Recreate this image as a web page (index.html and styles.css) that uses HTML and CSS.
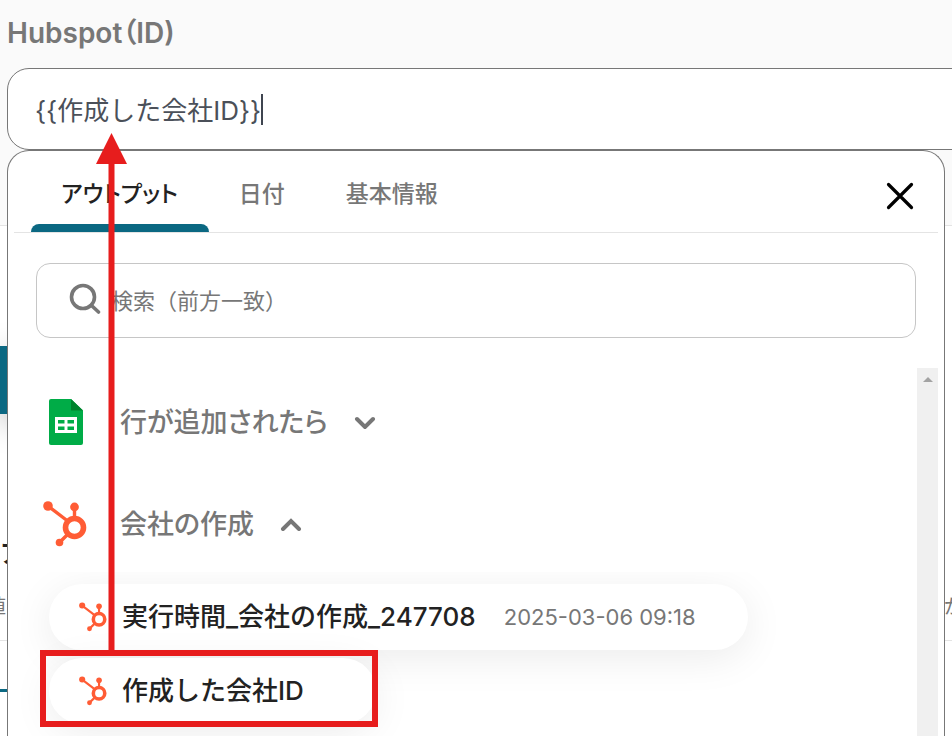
FILE: index.html
```html
<!DOCTYPE html>
<html lang="ja">
<head>
    <meta charset="UTF-8">
    <meta name="viewport" content="width=device-width, initial-scale=1.0">
    <title>Hubspot（ID)</title>
    <link rel="stylesheet" href="styles.css">
</head>
<body>
    <svg class="symbols" aria-hidden="true">
        <symbol id="hubspot" viewBox="0 0 44 46">
            <g fill="none" stroke="#ff5c35">
                <circle cx="31.500" cy="26.500" r="9" stroke-width="5.600"/>
                <path d="M31.500 16V6M24 19.500L5 5M25 33L16 42" stroke-width="3.400"/>
            </g>
            <g fill="#ff5c35">
                <circle cx="5" cy="5" r="4.800"/>
                <circle cx="31.500" cy="6" r="4.400"/>
                <circle cx="16.500" cy="41.500" r="3.800"/>
            </g>
        </symbol>
    </svg>

    <div class="page">
        <div class="field">
            <label for="companyId">Hubspot（ID)</label>
            <div class="field-box">
                <input type="text" id="companyId" value="{{作成した会社ID}}">
                <span class="caret"></span>
            </div>
        </div>

        <!-- パネルの後ろの画面 -->
        <div class="behind">
            <button type="button" class="save" aria-label="保存"></button>
            <div class="behind-title"><span>ア</span></div>
            <div class="behind-row"><span class="edge">値</span><span class="edge-right">が</span></div>
            <div class="behind-line"></div>
        </div>

        <div class="panel">
            <div class="panel-head">
                <div class="tabs" role="tablist">
                    <button type="button" role="tab" class="tab active" aria-selected="true">アウトプット</button>
                    <button type="button" role="tab" class="tab">日付</button>
                    <button type="button" role="tab" class="tab">基本情報</button>
                </div>
                <button type="button" class="close" aria-label="閉じる">
                    <svg width="28" height="28" viewBox="0 0 28 28"><path d="M2.500 2.500L25.500 25.500M25.500 2.500L2.500 25.500" fill="none" stroke="#000" stroke-width="3.200" stroke-linecap="round"/></svg>
                </button>
            </div>

            <div class="search">
                <svg width="32" height="32" viewBox="0 0 32 32"><g fill="none" stroke="#777" stroke-width="3.600" stroke-linecap="round"><circle cx="14" cy="14" r="11.500"/><path d="M22.500 22.500L29.500 29"/></g></svg>
                <input type="text" aria-label="検索" placeholder="検索（前方一致）">
            </div>

            <div class="list">
                <div class="list-body">
                    <button type="button" class="group">
                        <span class="group-icon">
                            <svg width="34" height="46" viewBox="0 0 34 46">
                                <path d="M2 0H22L34 11.500V44a2 2 0 0 1-2 2H2a2 2 0 0 1-2-2V2a2 2 0 0 1 2-2z" fill="#00ac47"/>
                                <path d="M22 0L34 11.500H22z" fill="#00832d"/>
                                <path d="M6 18H28V34H6z" fill="#fff"/>
                                <path d="M9 21h6.500v3.500H9zM18.500 21H25v3.500h-6.500zM9 27.500h6.500V31H9zM18.500 27.500H25V31h-6.500z" fill="#00ac47"/>
                            </svg>
                        </span>
                        <span class="group-name">行が追加されたら</span>
                        <svg class="chevron" width="22" height="14" viewBox="0 0 22 14"><path d="M3 4L11 12L19 4" fill="none" stroke="#777" stroke-width="4" stroke-linecap="round"/></svg>
                    </button>
                    <button type="button" class="group">
                        <span class="group-icon"><svg width="46" height="46" viewBox="0 0 46 46"><use href="#hubspot" width="44" height="46"/></svg></span>
                        <span class="group-name">会社の作成</span>
                        <svg class="chevron" width="22" height="14" viewBox="0 0 22 14"><path d="M3 12L11 4L19 12" fill="none" stroke="#777" stroke-width="4" stroke-linecap="round"/></svg>
                    </button>
                    <div class="outputs">
                        <button type="button" class="output">
                            <svg class="output-icon" width="28" height="30"><use href="#hubspot"/></svg>
                            <span class="output-name">実行時間_会社の作成_247708</span>
                            <span class="output-value">2025-03-06 09:18</span>
                        </button>
                        <button type="button" class="output">
                            <svg class="output-icon" width="28" height="30"><use href="#hubspot"/></svg>
                            <span class="output-name">作成した会社ID</span>
                        </button>
                    </div>
                </div>
                <div class="scrollbar"></div>
            </div>
        </div>

        <!-- 矢印と赤枠 -->
        <svg class="marker" width="400" height="736" viewBox="0 0 400 736">
            <path d="M111.500 133L127 164H96z" fill="#e71d1d"/>
            <path d="M111.500 160V653" stroke="#e71d1d" stroke-width="6"/>
            <rect x="43" y="653" width="332" height="71" fill="none" stroke="#e71d1d" stroke-width="6"/>
        </svg>
    </div>
</body>
</html>
```

FILE: styles.css
```css
* {
    box-sizing: border-box;
}
body {
    margin: 0;
    font-family: Inter, "Noto Sans CJK JP", sans-serif;
    color: #777;
    background: #fff;
}
button,
input {
    font-family: inherit;
    color: inherit;
    background: none;
    border: none;
    padding: 0;
    outline: none;
}
button {
    cursor: pointer;
}
svg {
    display: block;
    flex: none;
}
.symbols {
    position: absolute;
    width: 0;
    height: 0;
}
.page {
    position: relative;
    height: 100vh;
    overflow: hidden;
}

/* 入力欄 */
.field {
    height: 226px;
    padding: 16px 0 0 7px;
    background: #fafafa;
    border-bottom: 1px solid #e4e4e4;
}
.field label {
    display: block;
    height: 52px;
    line-height: 34px;
    font-size: 28px;
    font-weight: 600;
    font-feature-settings: "palt";
}
.field-box {
    display: flex;
    align-items: center;
    height: 82px;
    margin-right: -40px;
    padding-left: 27px;
    border: 1px solid #777;
    border-radius: 22px;
    background: #fff;
}
.field-box input {
    field-sizing: content;
    height: 40px;
    padding-bottom: 2px;
    font-size: 26px;
    color: #4b5059;
}
.caret {
    width: 2px;
    height: 31px;
    background: #3f4550;
}

/* 後ろの画面 */
.behind {
    padding-top: 120px;
}
.save {
    display: block;
    width: 60px;
    height: 68px;
    background: #0b6882;
    box-shadow: 0 8px 32px rgba(0, 0, 0, 0.25);
}
.behind-title {
    margin-top: 120px;
    height: 40px;
    line-height: 40px;
    font-size: 24px;
    font-weight: 700;
    color: #222;
}
.behind-row {
    display: flex;
    justify-content: space-between;
    height: 67px;
    padding: 16px 8px 0 0;
    line-height: 34px;
    font-size: 20px;
    border-bottom: 1px solid #e4e4e4;
}
.edge {
    display: flex;
    justify-content: flex-end;
    width: 6px;
}
.edge-right {
    width: 0;
}
.behind-line {
    width: 40px;
    height: 3px;
    margin-top: 48px;
    background: #0b6882;
}

/* パネル */
.panel {
    position: absolute;
    top: 150px;
    right: 7px;
    bottom: 0;
    left: 7px;
    display: flex;
    flex-direction: column;
    padding: 0 6px;
    border: 1px solid #777;
    border-bottom: none;
    border-radius: 22px 22px 0 0;
    background: #fff;
}
.panel-head {
    display: flex;
    flex: none;
    justify-content: space-between;
    height: 82px;
    padding: 0 24px 0 17px;
    border-bottom: 1px solid #e4e4e4;
}
.tabs {
    display: flex;
}
.tab {
    position: relative;
    padding: 8px 31px 0 30px;
    line-height: 70px;
    font-size: 23px;
    font-weight: 500;
    font-feature-settings: "palt";
    display: flex;
}
.tab.active {
    color: #222;
}
.tab.active::after {
    content: "";
    position: absolute;
    right: 0;
    bottom: 0;
    left: 0;
    height: 8px;
    border-radius: 8px 8px 0 0;
    background: #0b6882;
}
.close {
    padding-top: 8px;
}
.search {
    display: flex;
    flex: none;
    align-items: center;
    gap: 10px;
    height: 75px;
    margin: 30px 22px;
    padding: 0 32px;
    border: 1px solid #c6c6c6;
    border-radius: 14px;
}
.search svg {
    margin-bottom: 4px;
}
.search input {
    flex: 1;
    height: 40px;
    font-size: 22px;
}
.search input::placeholder {
    color: #777;
}

/* 一覧 */
.list {
    display: flex;
    flex: 1;
    min-height: 0;
}
.list-body {
    flex: 1;
    overflow: hidden;
}
.scrollbar {
    width: 21px;
    padding-top: 9px;
    background: #f0f0f0;
}
.scrollbar::before {
    content: "";
    display: block;
    width: 0;
    margin: 0 auto;
    border: 5px solid transparent;
    border-top: none;
    border-bottom-color: #a3a3a3;
}
.group {
    display: flex;
    align-items: center;
    height: 102px;
    padding: 6px 0 0 28px;
    font-size: 27px;
    font-weight: 500;
    font-feature-settings: "palt";
}
.group-icon {
    display: flex;
    justify-content: center;
    width: 48px;
    margin-right: 30px;
}
.group-name {
    padding-bottom: 4px;
}
.chevron {
    margin-left: 26px;
}
.outputs {
    display: flex;
    flex-direction: column;
    align-items: flex-start;
    gap: 8px;
    height: 300px;
    padding: 12px 0 0 35px;
    overflow: hidden;
}
.output {
    display: flex;
    flex: none;
    align-items: center;
    height: 66px;
    padding: 0 52px 0 30px;
    border-radius: 33px;
    background: #fff;
    box-shadow: 0 8px 40px rgba(0, 0, 0, 0.08);
}
.output-icon {
    margin-right: 15px;
}
.output-name {
    margin-right: 20px;
    padding-bottom: 5px;
    font-size: 26px;
    font-weight: 500;
    color: #222;
}
.output-value {
    padding-left: 8px;
    font-size: 22px;
}

.marker {
    position: absolute;
    top: 0;
    left: 0;
    pointer-events: none;
}
```
